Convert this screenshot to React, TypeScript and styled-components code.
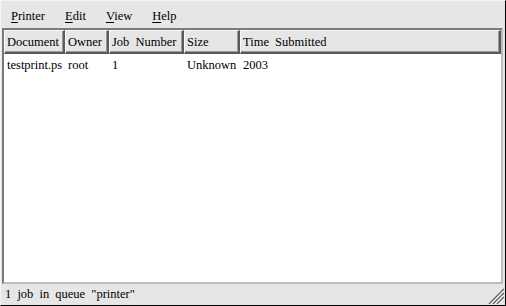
import React from 'react';
import styled, { createGlobalStyle } from 'styled-components';

const GlobalStyle = createGlobalStyle`
  html, body {
    margin: 0;
    padding: 0;
    background: #e6e6e6;
  }
  body {
    font-family: "Liberation Serif", "DejaVu Serif", serif;
    font-size: 12.5px;
    color: #000;
  }
`;

const Window = styled.div`
  width: 506px;
  height: 306px;
  box-sizing: border-box;
  display: flex;
  flex-direction: column;
  background: #e6e6e6;
  border-top: 1px solid #f4f4f4;
  border-left: 1px solid #f4f4f4;
  border-right: 1px solid #000;
  border-bottom: 1px solid #000;
`;

const MenuBar = styled.div`
  height: 27px;
  display: flex;
  align-items: center;
`;

const MenuItem = styled.span`
  padding: 4px 10px 0 10px;
  word-spacing: 2px;
`;

const Key = styled.span`
  text-decoration: underline;
  text-underline-offset: 2px;
`;

const ListFrame = styled.div`
  flex: 1;
  margin: 0 2px 0 1px;
  display: flex;
  flex-direction: column;
  background: #fff;
  border-top: 2px solid #7a7a7a;
  border-left: 2px solid #7a7a7a;
  border-right: 2px solid #bdbdbd;
  border-bottom: 2px solid #bdbdbd;
  overflow: hidden;
`;

const Header = styled.div`
  display: grid;
  grid-template-columns: 61px 44px 75px 56px 1fr;
  height: 24px;
  background: #e6e6e6;
`;

const HeaderCell = styled.div`
  box-sizing: border-box;
  display: flex;
  align-items: center;
  padding: 1px 0 0 2px;
  border-top: 1px solid #fafafa;
  border-left: 1px solid #fafafa;
  border-right: 2px solid #5a5a5a;
  border-bottom: 2px solid #5a5a5a;
  box-shadow: inset -1px -1px 0 #9a9a9a;
  word-spacing: 3px;
  white-space: nowrap;
`;

const Row = styled.div`
  display: grid;
  grid-template-columns: 61px 44px 75px 56px 1fr;
  height: 18px;
  margin-top: 2px;
`;

const Cell = styled.div`
  display: flex;
  align-items: center;
  padding-left: 3px;
  white-space: nowrap;
`;

const StatusBar = styled.div`
  height: 21px;
  display: flex;
  align-items: center;
  justify-content: space-between;
  padding-left: 4px;
  word-spacing: 3px;
`;

const StatusText = styled.span`
  margin-top: -1px;
`;

const Grip = styled.svg`
  width: 16px;
  height: 16px;
  align-self: flex-end;
  margin: 0 1px 1px 0;
`;

const columns = ['Document', 'Owner', 'Job Number', 'Size', 'Time Submitted'];
const jobs = [['testprint.ps', 'root', '1', 'Unknown', '2003']];

export default function App() {
  return (
    <>
      <GlobalStyle />
      <Window>
        <MenuBar>
          <MenuItem><Key>P</Key>rinter</MenuItem>
          <MenuItem><Key>E</Key>dit</MenuItem>
          <MenuItem><Key>V</Key>iew</MenuItem>
          <MenuItem><Key>H</Key>elp</MenuItem>
        </MenuBar>
        <ListFrame>
          <Header>
            {columns.map(c => (
              <HeaderCell key={c}>{c}</HeaderCell>
            ))}
          </Header>
          {jobs.map((job, i) => (
            <Row key={i}>
              {job.map((v, j) => (
                <Cell key={j}>{v}</Cell>
              ))}
            </Row>
          ))}
        </ListFrame>
        <StatusBar>
          <StatusText>1 job in queue "printer"</StatusText>
          <Grip viewBox="0 0 16 16">
            {[1, 5, 9].map(o => (
              <g key={o}>
                <line x1={o} y1={16} x2={16} y2={o} stroke="#5e5e5e" strokeWidth={1.4} />
                <line x1={o + 1.6} y1={16} x2={16} y2={o + 1.6} stroke="#ffffff" strokeWidth={1} />
              </g>
            ))}
          </Grip>
        </StatusBar>
      </Window>
    </>
  );
}
